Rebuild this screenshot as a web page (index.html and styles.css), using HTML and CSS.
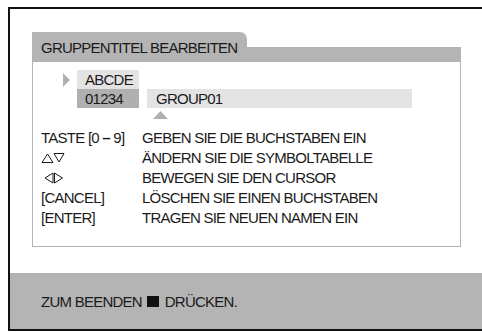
FILE: index.html
```html
<!DOCTYPE html>
<html>
<head>
<meta charset="utf-8">
<link rel="stylesheet" href="styles.css">
</head>
<body>
<div class="frame">
  <div class="panel">
    <div class="head">
      <div class="tab">GRUPPENTITEL BEARBEITEN</div>
      <div class="strip"></div>
    </div>
    <div class="body">
      <div class="editor">
        <div class="erow">
          <svg class="cursor" width="7" height="14" viewBox="0 0 7 14"><path d="M0 0 L7 7 L0 14 Z" fill="#b0b0b0"/></svg>
          <div class="box light">ABCDE</div>
        </div>
        <div class="erow">
          <div class="spacer"></div>
          <div class="box dark">01234</div>
          <div class="fieldcol">
            <div class="field">GROUP01</div>
            <svg class="pointer" width="15" height="8" viewBox="0 0 15 8"><path d="M0 8 L7.5 0 L15 8 Z" fill="#b0b0b0"/></svg>
          </div>
        </div>
      </div>
      <div class="keys">
        <div class="key">TASTE [0 <b>–</b> 9]</div><div class="desc">GEBEN SIE DIE BUCHSTABEN EIN</div>
        <div class="key"><svg class="sym" width="24" height="10" viewBox="0 0 24 10"><path d="M1 9.5 L6.5 1 L12 9.5 Z M13 0.5 L23 0.5 L18 9 Z" fill="none" stroke="#1a1a1a" stroke-width="1"/></svg></div><div class="desc">ÄNDERN SIE DIE SYMBOLTABELLE</div>
        <div class="key"><svg class="sym" width="24" height="12" viewBox="0 0 24 12"><path d="M4 6 L12 1 L12 11 Z M13.5 1 L13.5 11 L21.5 6 Z" fill="none" stroke="#1a1a1a" stroke-width="1"/></svg></div><div class="desc">BEWEGEN SIE DEN CURSOR</div>
        <div class="key">[CANCEL]</div><div class="desc">LÖSCHEN SIE EINEN BUCHSTABEN</div>
        <div class="key">[ENTER]</div><div class="desc">TRAGEN SIE NEUEN NAMEN EIN</div>
      </div>
    </div>
  </div>
  <div class="footer">ZUM BEENDEN <span class="stop"></span> DRÜCKEN.</div>
</div>
</body>
</html>
```
FILE: styles.css
```css
html, body {
  margin: 0;
  padding: 0;
  background: #ffffff;
}
body {
  font-family: "Liberation Sans", Arial, sans-serif;
  font-size: 15px;
  letter-spacing: -0.75px;
  color: #1a1a1a;
  overflow: hidden;
}
.frame {
  margin-top: 7px;
  margin-left: 8px;
  width: 490px;
  height: 320px;
  border-top: 2px solid #111;
  border-left: 2px solid #111;
  border-bottom: 2px solid #111;
  display: flex;
  flex-direction: column;
}
.panel {
  margin-top: 23px;
  margin-left: 22px;
  width: 429px;
}
.head {
  display: flex;
  align-items: flex-end;
  height: 30px;
}
.tab {
  width: 206px;
  height: 30px;
  background: #b4b4b4;
  border-top-right-radius: 7px;
  padding-left: 9px;
  line-height: 31px;
  white-space: nowrap;
}
.strip {
  flex: 1;
  height: 15px;
  background: #b4b4b4;
}
.body {
  height: 176px;
  border: 1px solid #b4b4b4;
  border-top: none;
  padding: 8px 0 0 8px;
}
.editor {
  margin-left: 22px;
}
.erow {
  display: flex;
  align-items: flex-start;
}
.cursor {
  margin-top: 3px;
  margin-right: 7px;
}
.spacer {
  width: 14px;
}
.box {
  width: 54px;
  height: 19px;
  line-height: 19px;
  padding-left: 8px;
}
.light {
  background: #e3e3e3;
}
.dark {
  background: #b0b0b0;
}
.fieldcol {
  margin-left: 8px;
  display: flex;
  flex-direction: column;
}
.field {
  width: 256px;
  height: 19px;
  line-height: 19px;
  padding-left: 9px;
  background: #e3e3e3;
}
.pointer {
  display: block;
  margin-top: 3px;
  margin-left: 6px;
}
.keys {
  margin-top: 9px;
  display: grid;
  grid-template-columns: 101px auto;
  grid-auto-rows: 20px;
  line-height: 20px;
}
.key b {
  font-weight: bold;
}
.sym {
  display: inline-block;
  vertical-align: middle;
  margin-top: -2px;
}
.footer {
  margin-top: auto;
  height: 56px;
  background: #b4b4b4;
  display: flex;
  align-items: center;
  padding-left: 31px;
  white-space: pre;
}
.stop {
  display: inline-block;
  width: 12px;
  height: 11px;
  background: #111;
  margin: 0 2px;
}
```
